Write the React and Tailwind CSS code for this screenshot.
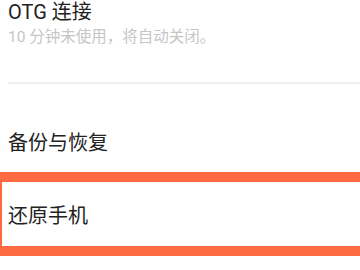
import React from "react";

export default function App() {
  return (
    <div className="w-[360px] h-[270px] overflow-hidden bg-white font-['Roboto','Noto_Sans_CJK_SC',sans-serif]">
      {/* OTG item */}
      <div className="px-2 pt-px">
        <div className="text-[20px] leading-[22px] text-[#222222]">OTG 连接</div>
        <div className="mt-[4px] text-[15.5px] leading-[20px] text-[#c6c6c6]">10 分钟未使用，将自动关闭。</div>
      </div>

      <div className="mt-[35px] ml-2 h-[2px] bg-[#efefef]" />

      <div className="h-[88px] flex items-end px-2 pb-[17px]">
        <span className="text-[20px] leading-[24px] text-[#222222]">备份与恢复</span>
      </div>

      <div className="h-[84px] border-y-[10px] border-l-2 border-[#ff6b40] flex items-center pl-[6px] pt-[4px]">
        <span className="text-[20px] leading-[24px] text-[#222222]">还原手机</span>
      </div>
    </div>
  );
}
